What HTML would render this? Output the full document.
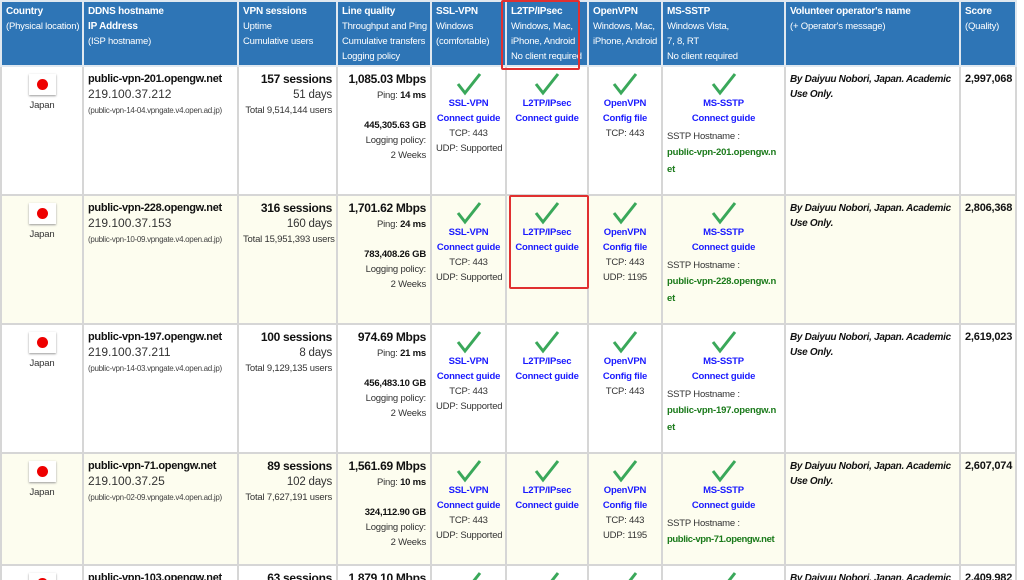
<!DOCTYPE html>
<html style="overflow:hidden"><head><meta charset="utf-8"><style>
*{margin:0;padding:0;box-sizing:border-box}
html,body{width:1024px;height:580px;overflow:hidden}
body{background:#fff;font-family:"Liberation Sans",Arial,sans-serif;font-size:9.5px;color:#333;position:relative;letter-spacing:-0.2px}
#wrap{position:absolute;left:0;top:0;width:1024px;height:580px;overflow:hidden}
table{border-collapse:collapse;table-layout:fixed;width:1015px;position:absolute;left:0;top:0}
td{border:2px solid #d6d6d6;vertical-align:top;padding:5px 4px 0;line-height:15px;overflow:hidden;white-space:nowrap}
tr.h td{background:#2e75b6;color:#fff;border-color:#e0e8f0;padding:2px 4px 0;line-height:15px;font-size:9.5px}
tr.h b{font-size:10px}
tr.y td{background:#fdfdef}
.c{text-align:center}.r{text-align:right}
.host{font-weight:bold;color:#111;font-size:11px;letter-spacing:-0.3px}
.ip{font-size:12px;color:#333;letter-spacing:0}
.isp{font-size:8px;color:#444;letter-spacing:-0.3px}
.big{font-weight:bold;color:#111;font-size:12px;letter-spacing:-0.3px}
.days{font-size:11.5px}
a{color:#1a1aff;font-weight:bold;text-decoration:none;display:block}
.g{color:#1a7a1a;font-weight:bold;word-break:break-all;white-space:normal;display:block;width:114px;text-align:left;line-height:17px}
.ck{display:block;margin:0 auto 0;width:26px;height:24px}
.flag{width:27px;height:21px;margin:2px auto 3px;background:#fff;box-shadow:0 1px 2px #999;position:relative}
.flag:after{content:"";position:absolute;left:8px;top:5px;width:11px;height:11px;border-radius:50%;background:#e00}
.it{font-weight:bold;font-style:italic;color:#111;font-size:10px;white-space:normal;word-break:break-all;display:block;letter-spacing:-0.3px}
.sc{font-weight:bold;color:#111;font-size:11px}
.box{position:absolute;border:2px solid #e03030;border-radius:2px}
</style></head><body><div id="wrap">
<table>
<colgroup><col style="width:82px"><col style="width:155px"><col style="width:99px"><col style="width:94px"><col style="width:75px"><col style="width:82px"><col style="width:74px"><col style="width:123px"><col style="width:175px"><col style="width:56px"></colgroup>
<tr class="h" style="height:65px"><td><b>Country</b><br>(Physical location)</td><td><b>DDNS hostname</b><br><b>IP Address</b><br>(ISP hostname)</td><td><b>VPN sessions</b><br>Uptime<br>Cumulative users</td><td><b>Line quality</b><br>Throughput and Ping<br>Cumulative transfers<br>Logging policy</td><td><b>SSL-VPN</b><br>Windows<br>(comfortable)</td><td><b>L2TP/IPsec</b><br>Windows, Mac,<br>iPhone, Android<br>No client required</td><td><b>OpenVPN</b><br>Windows, Mac,<br>iPhone, Android</td><td><b>MS-SSTP</b><br>Windows Vista,<br>7, 8, RT<br>No client required</td><td><b>Volunteer operator's name</b><br>(+ Operator's message)</td><td><b>Score</b><br>(Quality)</td></tr>

<tr style="height:129px"><td class="c"><div class="flag"></div>Japan</td><td><span class="host">public-vpn-201.opengw.net</span><br><span class="ip">219.100.37.212</span><br><span class="isp">(public-vpn-14-04.vpngate.v4.open.ad.jp)</span></td><td class="r"><span class="big">157 sessions</span><br><span class="days">51 days</span><br>Total 9,514,144 users</td><td class="r"><span class="big">1,085.03 Mbps</span><br>Ping: <b style="color:#111">14 ms</b><br><br><b style="color:#111">445,305.63 GB</b><br>Logging policy:<br>2 Weeks</td>
<td class="c"><svg class="ck" viewBox="0 0 26 24"><path d="M2 12 L9 21 L24 2" fill="none" stroke="#3aa85a" stroke-width="3"/></svg><a>SSL-VPN</a><a>Connect guide</a>TCP: 443<br>UDP: Supported</td>
<td class="c"><svg class="ck" viewBox="0 0 26 24"><path d="M2 12 L9 21 L24 2" fill="none" stroke="#3aa85a" stroke-width="3"/></svg><a>L2TP/IPsec</a><a>Connect guide</a></td>
<td class="c"><svg class="ck" viewBox="0 0 26 24"><path d="M2 12 L9 21 L24 2" fill="none" stroke="#3aa85a" stroke-width="3"/></svg><a>OpenVPN</a><a>Config file</a>TCP: 443</td>
<td class="c"><svg class="ck" viewBox="0 0 26 24"><path d="M2 12 L9 21 L24 2" fill="none" stroke="#3aa85a" stroke-width="3"/></svg><a>MS-SSTP</a><a>Connect guide</a><div style="text-align:left;margin-top:3px">SSTP Hostname :</div><span class="g">public-vpn-201.opengw.net</span></td>
<td><span class="it">By Daiyuu Nobori, Japan. Academic Use Only.</span></td><td><span class="sc">2,997,068</span></td></tr>

<tr class="y" style="height:129px"><td class="c"><div class="flag"></div>Japan</td><td><span class="host">public-vpn-228.opengw.net</span><br><span class="ip">219.100.37.153</span><br><span class="isp">(public-vpn-10-09.vpngate.v4.open.ad.jp)</span></td><td class="r"><span class="big">316 sessions</span><br><span class="days">160 days</span><br>Total 15,951,393 users</td><td class="r"><span class="big">1,701.62 Mbps</span><br>Ping: <b style="color:#111">24 ms</b><br><br><b style="color:#111">783,408.26 GB</b><br>Logging policy:<br>2 Weeks</td>
<td class="c"><svg class="ck" viewBox="0 0 26 24"><path d="M2 12 L9 21 L24 2" fill="none" stroke="#3aa85a" stroke-width="3"/></svg><a>SSL-VPN</a><a>Connect guide</a>TCP: 443<br>UDP: Supported</td>
<td class="c"><svg class="ck" viewBox="0 0 26 24"><path d="M2 12 L9 21 L24 2" fill="none" stroke="#3aa85a" stroke-width="3"/></svg><a>L2TP/IPsec</a><a>Connect guide</a></td>
<td class="c"><svg class="ck" viewBox="0 0 26 24"><path d="M2 12 L9 21 L24 2" fill="none" stroke="#3aa85a" stroke-width="3"/></svg><a>OpenVPN</a><a>Config file</a>TCP: 443<br>UDP: 1195</td>
<td class="c"><svg class="ck" viewBox="0 0 26 24"><path d="M2 12 L9 21 L24 2" fill="none" stroke="#3aa85a" stroke-width="3"/></svg><a>MS-SSTP</a><a>Connect guide</a><div style="text-align:left;margin-top:3px">SSTP Hostname :</div><span class="g">public-vpn-228.opengw.net</span></td>
<td><span class="it">By Daiyuu Nobori, Japan. Academic Use Only.</span></td><td><span class="sc">2,806,368</span></td></tr>

<tr style="height:129px"><td class="c"><div class="flag"></div>Japan</td><td><span class="host">public-vpn-197.opengw.net</span><br><span class="ip">219.100.37.211</span><br><span class="isp">(public-vpn-14-03.vpngate.v4.open.ad.jp)</span></td><td class="r"><span class="big">100 sessions</span><br><span class="days">8 days</span><br>Total 9,129,135 users</td><td class="r"><span class="big">974.69 Mbps</span><br>Ping: <b style="color:#111">21 ms</b><br><br><b style="color:#111">456,483.10 GB</b><br>Logging policy:<br>2 Weeks</td>
<td class="c"><svg class="ck" viewBox="0 0 26 24"><path d="M2 12 L9 21 L24 2" fill="none" stroke="#3aa85a" stroke-width="3"/></svg><a>SSL-VPN</a><a>Connect guide</a>TCP: 443<br>UDP: Supported</td>
<td class="c"><svg class="ck" viewBox="0 0 26 24"><path d="M2 12 L9 21 L24 2" fill="none" stroke="#3aa85a" stroke-width="3"/></svg><a>L2TP/IPsec</a><a>Connect guide</a></td>
<td class="c"><svg class="ck" viewBox="0 0 26 24"><path d="M2 12 L9 21 L24 2" fill="none" stroke="#3aa85a" stroke-width="3"/></svg><a>OpenVPN</a><a>Config file</a>TCP: 443</td>
<td class="c"><svg class="ck" viewBox="0 0 26 24"><path d="M2 12 L9 21 L24 2" fill="none" stroke="#3aa85a" stroke-width="3"/></svg><a>MS-SSTP</a><a>Connect guide</a><div style="text-align:left;margin-top:3px">SSTP Hostname :</div><span class="g">public-vpn-197.opengw.net</span></td>
<td><span class="it">By Daiyuu Nobori, Japan. Academic Use Only.</span></td><td><span class="sc">2,619,023</span></td></tr>

<tr class="y" style="height:112px"><td class="c"><div class="flag"></div>Japan</td><td><span class="host">public-vpn-71.opengw.net</span><br><span class="ip">219.100.37.25</span><br><span class="isp">(public-vpn-02-09.vpngate.v4.open.ad.jp)</span></td><td class="r"><span class="big">89 sessions</span><br><span class="days">102 days</span><br>Total 7,627,191 users</td><td class="r"><span class="big">1,561.69 Mbps</span><br>Ping: <b style="color:#111">10 ms</b><br><br><b style="color:#111">324,112.90 GB</b><br>Logging policy:<br>2 Weeks</td>
<td class="c"><svg class="ck" viewBox="0 0 26 24"><path d="M2 12 L9 21 L24 2" fill="none" stroke="#3aa85a" stroke-width="3"/></svg><a>SSL-VPN</a><a>Connect guide</a>TCP: 443<br>UDP: Supported</td>
<td class="c"><svg class="ck" viewBox="0 0 26 24"><path d="M2 12 L9 21 L24 2" fill="none" stroke="#3aa85a" stroke-width="3"/></svg><a>L2TP/IPsec</a><a>Connect guide</a></td>
<td class="c"><svg class="ck" viewBox="0 0 26 24"><path d="M2 12 L9 21 L24 2" fill="none" stroke="#3aa85a" stroke-width="3"/></svg><a>OpenVPN</a><a>Config file</a>TCP: 443<br>UDP: 1195</td>
<td class="c"><svg class="ck" viewBox="0 0 26 24"><path d="M2 12 L9 21 L24 2" fill="none" stroke="#3aa85a" stroke-width="3"/></svg><a>MS-SSTP</a><a>Connect guide</a><div style="text-align:left;margin-top:3px">SSTP Hostname :</div><span class="g" style="width:118px;letter-spacing:-0.4px">public-vpn-71.opengw.net</span></td>
<td><span class="it">By Daiyuu Nobori, Japan. Academic Use Only.</span></td><td><span class="sc">2,607,074</span></td></tr>

<tr style="height:60px"><td class="c"><div class="flag"></div>Japan</td><td><span class="host">public-vpn-103.opengw.net</span></td><td class="r"><span class="big">63 sessions</span></td><td class="r"><span class="big">1,879.10 Mbps</span></td>
<td class="c"><svg class="ck" viewBox="0 0 26 24"><path d="M2 12 L9 21 L24 2" fill="none" stroke="#3aa85a" stroke-width="3"/></svg></td><td class="c"><svg class="ck" viewBox="0 0 26 24"><path d="M2 12 L9 21 L24 2" fill="none" stroke="#3aa85a" stroke-width="3"/></svg></td><td class="c"><svg class="ck" viewBox="0 0 26 24"><path d="M2 12 L9 21 L24 2" fill="none" stroke="#3aa85a" stroke-width="3"/></svg></td><td class="c"><svg class="ck" viewBox="0 0 26 24"><path d="M2 12 L9 21 L24 2" fill="none" stroke="#3aa85a" stroke-width="3"/></svg></td><td><span class="it">By Daiyuu Nobori, Japan. Academic U</span></td><td><span class="sc">2,409,982</span></td></tr>
</table>
<div class="box" style="left:501px;top:0;width:79px;height:70px"></div>
<div class="box" style="left:509px;top:195px;width:80px;height:94px"></div>
</div></body></html>
